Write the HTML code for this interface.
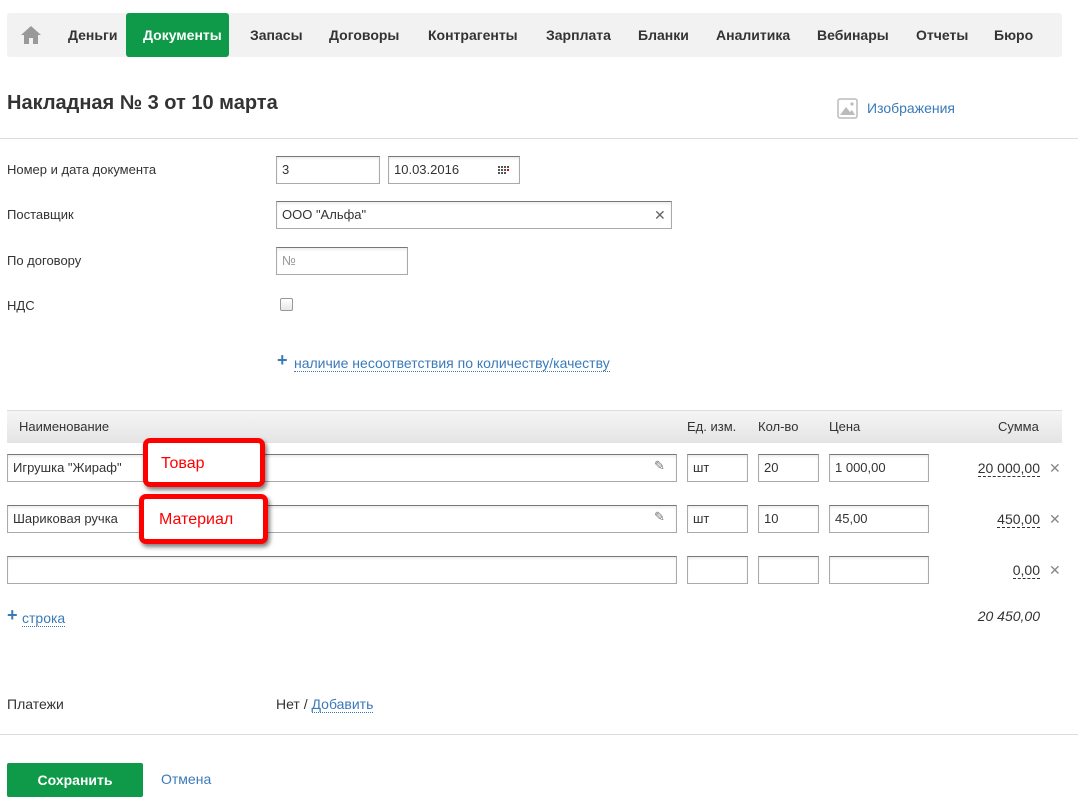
<!DOCTYPE html>
<html><head><meta charset="utf-8"><style>
body{margin:0;width:1078px;height:810px;position:relative;background:#fff;font-family:"Liberation Sans",sans-serif;color:#333;overflow:hidden}
.a{position:absolute;white-space:nowrap}
.nav{position:absolute;left:7px;top:13px;width:1055px;height:44px;background:#f2f2f2;border-radius:3px}
.ni{position:absolute;top:13px;height:44px;line-height:44px;font-size:14px;font-weight:bold;color:#333}
.inp{position:absolute;box-sizing:border-box;border:1px solid #a9a9a9;border-top-color:#777;background:#fff;font-size:13px;padding-left:5px;line-height:26px;height:28px;box-shadow:inset 0 2px 2px #eee}
.lbl{position:absolute;left:7px;font-size:13px;color:#333}
.lnk{color:#3a7ab8}
.dash{border-bottom:1px dashed #333}
.x{position:absolute;left:1049px;font-size:14px;color:#888}
.call{position:absolute;box-sizing:border-box;border:5px solid #f00;border-radius:7px;background:#fff;color:#f00;font-size:16px;padding-left:13px;box-shadow:2px 3px 4px rgba(0,0,0,.5)}
</style></head><body>
<div class="nav"></div>
<svg class="a" style="left:20px;top:25px" width="22" height="20" viewBox="0 0 22 20"><path d="M11 1 L1 10 H4 V19 H9 V13 H13 V19 H18 V10 H21 Z" fill="#999"/></svg>
<div class="a" style="left:126px;top:13px;width:103px;height:44px;background:#0e9a48;border-radius:3px"></div>
<div class="ni" style="left:68px">Деньги</div>
<div class="ni" style="left:143px;color:#fff">Документы</div>
<div class="ni" style="left:250px">Запасы</div>
<div class="ni" style="left:329px">Договоры</div>
<div class="ni" style="left:428px">Контрагенты</div>
<div class="ni" style="left:546px">Зарплата</div>
<div class="ni" style="left:638px">Бланки</div>
<div class="ni" style="left:716px">Аналитика</div>
<div class="ni" style="left:817px">Вебинары</div>
<div class="ni" style="left:916px">Отчеты</div>
<div class="ni" style="left:994px">Бюро</div>

<div class="a" style="left:7px;top:92px;font-size:20px;font-weight:bold;color:#333">Накладная № 3 от 10 марта</div>
<svg class="a" style="left:837px;top:98px" width="21" height="21" viewBox="0 0 21 21"><rect x="1" y="1" width="19" height="19" rx="2" fill="#fff" stroke="#bbb" stroke-width="1.5"/><path d="M3 17 L9 9 L13 14 L15 12 L18 17 Z" fill="#bbb"/><circle cx="15" cy="6" r="1.6" fill="#bbb"/></svg>
<div class="a lnk" style="left:867px;top:100px;font-size:14px">Изображения</div>
<div class="a" style="left:0;top:138px;width:1078px;height:1px;background:#ddd"></div>

<div class="lbl" style="top:162px">Номер и дата документа</div>
<div class="inp" style="left:276px;top:156px;width:104px">3</div>
<div class="inp" style="left:388px;top:156px;width:132px">10.03.2016</div>
<svg class="a" style="left:498px;top:166px" width="11" height="8"><g fill="#555"><rect x="0" y="0" width="2" height="2"/><rect x="3" y="0" width="2" height="2"/><rect x="6" y="0" width="2" height="2"/><rect x="9" y="0" width="2" height="2"/><rect x="0" y="3" width="2" height="2"/><rect x="3" y="3" width="2" height="2"/><rect x="6" y="3" width="2" height="2"/><rect x="9" y="3" width="2" height="2" fill="#d00"/><rect x="0" y="6" width="2" height="2"/><rect x="3" y="6" width="2" height="2"/><rect x="6" y="6" width="2" height="2"/></g></svg>
<div class="lbl" style="top:207px">Поставщик</div>
<div class="inp" style="left:276px;top:201px;width:396px">ООО "Альфа"</div>
<div class="a" style="left:654px;top:207px;font-size:14px;color:#666">✕</div>
<div class="lbl" style="top:253px">По договору</div>
<div class="inp" style="left:276px;top:247px;width:132px;color:#999">№</div>
<div class="lbl" style="top:298px">НДС</div>
<div class="a" style="left:280px;top:298px;width:11px;height:11px;border:1px solid #999;border-radius:2px;background:linear-gradient(#fff,#e6e6e6)"></div>
<div class="a" style="left:277px;top:350px;font-size:18px;font-weight:bold;color:#3a7ab8">+</div>
<div class="a lnk" style="left:294px;top:355px;font-size:14px;border-bottom:1px dotted #3a7ab8">наличие несоответствия по количеству/качеству</div>

<div class="a" style="left:7px;top:410px;width:1055px;height:32px;background:linear-gradient(#f5f5f5,#e4e4e4);border-top:1px solid #ddd"></div>
<div class="a" style="left:19px;top:419px;font-size:13px">Наименование</div>
<div class="a" style="left:687px;top:419px;font-size:13px">Ед. изм.</div>
<div class="a" style="left:758px;top:419px;font-size:13px">Кол-во</div>
<div class="a" style="left:829px;top:419px;font-size:13px">Цена</div>
<div class="a" style="left:998px;top:419px;font-size:13px">Сумма</div>

<div class="inp" style="left:7px;top:454px;width:670px">Игрушка "Жираф"</div>
<div class="a" style="left:654px;top:458px;font-size:13px;color:#777">✎</div>
<div class="inp" style="left:687px;top:454px;width:61px">шт</div>
<div class="inp" style="left:758px;top:454px;width:61px">20</div>
<div class="inp" style="left:829px;top:454px;width:100px">1 000,00</div>
<div class="a dash" style="right:38px;top:460px;font-size:14px">20 000,00</div>
<div class="x" style="top:460px">✕</div>

<div class="inp" style="left:7px;top:505px;width:670px">Шариковая ручка</div>
<div class="a" style="left:654px;top:509px;font-size:13px;color:#777">✎</div>
<div class="inp" style="left:687px;top:505px;width:61px">шт</div>
<div class="inp" style="left:758px;top:505px;width:61px">10</div>
<div class="inp" style="left:829px;top:505px;width:100px">45,00</div>
<div class="a dash" style="right:38px;top:511px;font-size:14px">450,00</div>
<div class="x" style="top:511px">✕</div>

<div class="inp" style="left:7px;top:556px;width:670px"></div>
<div class="inp" style="left:687px;top:556px;width:61px"></div>
<div class="inp" style="left:758px;top:556px;width:61px"></div>
<div class="inp" style="left:829px;top:556px;width:100px"></div>
<div class="a dash" style="right:38px;top:562px;font-size:14px">0,00</div>
<div class="x" style="top:562px">✕</div>

<div class="call" style="left:143px;top:438px;width:122px;height:49px;line-height:41px">Товар</div>
<div class="call" style="left:139px;top:494px;width:129px;height:50px;line-height:42px;padding-left:15px">Материал</div>

<div class="a" style="left:7px;top:605px;font-size:18px;font-weight:bold;color:#3a7ab8">+</div>
<div class="a lnk" style="left:22px;top:610px;font-size:14px;border-bottom:1px dotted #3a7ab8">строка</div>
<div class="a" style="right:38px;top:608px;font-size:14px;font-style:italic">20 450,00</div>

<div class="lbl" style="top:696px;font-size:14px">Платежи</div>
<div class="a" style="left:276px;top:696px;font-size:14px">Нет / <span class="lnk" style="border-bottom:1px dotted #3a7ab8">Добавить</span></div>
<div class="a" style="left:0;top:734px;width:1078px;height:1px;background:#ddd"></div>
<div class="a" style="left:7px;top:763px;width:136px;height:34px;background:#0e9a48;border-radius:2px;color:#fff;font-weight:bold;font-size:14px;line-height:34px;text-align:center">Сохранить</div>
<div class="a lnk" style="left:161px;top:771px;font-size:14px">Отмена</div>
</body></html>
